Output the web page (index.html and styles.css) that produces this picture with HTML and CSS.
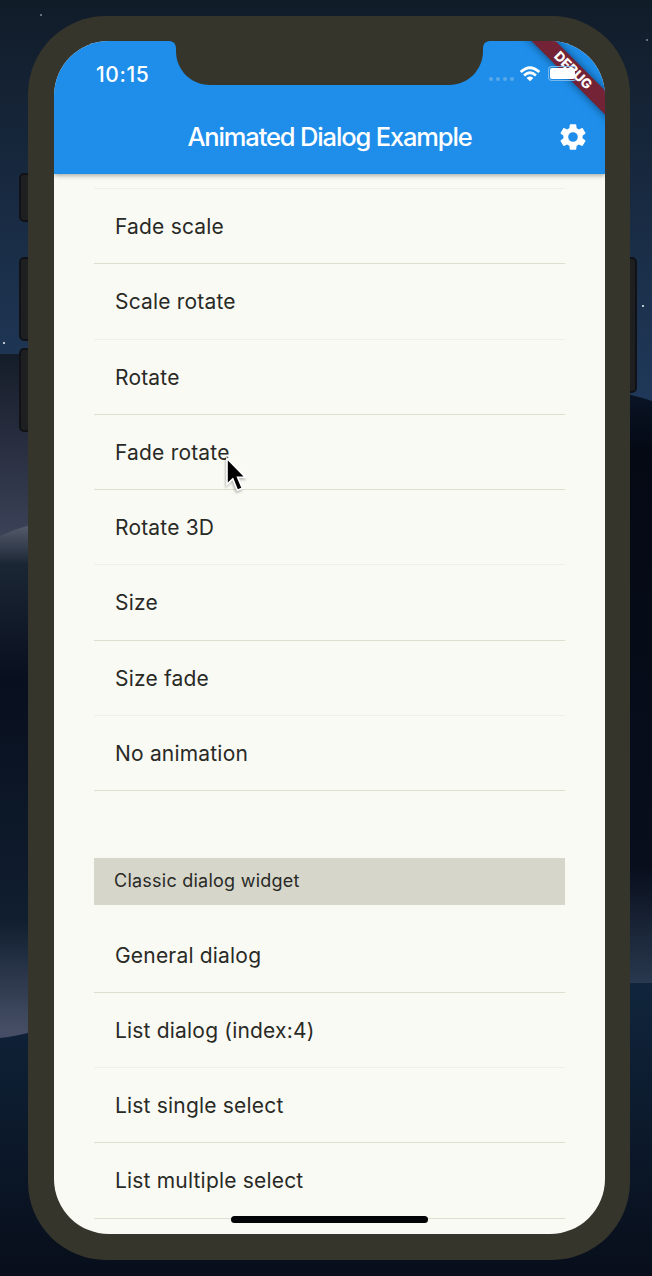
FILE: index.html
```html
<!DOCTYPE html>
<html lang="en">
<head>
<meta charset="utf-8">
<title>Animated Dialog Example</title>
<link rel="stylesheet" href="styles.css">
</head>
<body>
<div class="desktop">
  <svg class="wallpaper" viewBox="0 0 652 1276" preserveAspectRatio="none">
    <defs>
      <linearGradient id="sky" x1="0" y1="0" x2="0" y2="1"><stop offset="0" stop-color="#111c29"/><stop offset="1" stop-color="#203a5c"/></linearGradient>
      <linearGradient id="ridge" x1="0" y1="0" x2="0" y2="1"><stop offset="0" stop-color="#151c29"/><stop offset="1" stop-color="#3d4359"/></linearGradient>
      <linearGradient id="dune" x1="0" y1="0" x2="0" y2="1"><stop offset="0" stop-color="#5a6070"/><stop offset=".08" stop-color="#1b2635"/><stop offset=".3" stop-color="#080f1e"/><stop offset=".75" stop-color="#101e2f"/><stop offset=".96" stop-color="#454e65"/></linearGradient>
      <linearGradient id="low" x1="0" y1="0" x2="0" y2="1"><stop offset="0" stop-color="#10253c"/><stop offset="1" stop-color="#080e1b"/></linearGradient>
      <linearGradient id="east" x1="0" y1="0" x2="0" y2="1"><stop offset="0" stop-color="#0a1425"/><stop offset=".1" stop-color="#040914"/><stop offset=".8" stop-color="#080e1c"/><stop offset="1" stop-color="#29394f"/></linearGradient>
    </defs>
    <path fill="url(#sky)" d="M0 0h652v420H0z"/>
    <path fill="url(#ridge)" d="M0 354h40v190H0z"/>
    <path fill="url(#dune)" d="M0 536q12-6 40-14v530H0z"/>
    <path fill="url(#east)" d="M620 393q14 2 32 8v584h-32z"/>
    <path fill="url(#low)" d="M0 1038q12-1 32-6v180h590V983h30v293H0z"/>
    <g fill="#b8c6c8"><path d="M3 342h2v2H3zM642 305h2v2h-2z"/><path opacity=".5" d="M40 14h2v2h-2zM646 39h2v2h-2z"/></g>
  </svg>
  <i class="key key-mute"></i><i class="key key-up"></i><i class="key key-down"></i><i class="key key-power"></i>
  <main class="phone">
    <div class="screen">
      <header class="appbar">
        <div class="status">
          <span class="time">10:15</span>
          <div class="indicators">
            <span class="signal"><i></i><i></i><i></i><i></i></span>
            <svg class="wifi" viewBox="0 0 22 17"><g fill="none" stroke="#fff" stroke-width="2.9"><path d="M1.1 6.4Q11-2.7 20.9 6.4"/><path d="M4.7 10Q11 4.4 17.3 10"/></g><path fill="#fff" d="M7.4 12.7Q11 9.7 14.6 12.7L11 16.2z"/></svg>
            <span class="battery"></span>
          </div>
        </div>
        <div class="toolbar">
          <h1 class="title">Animated Dialog Example</h1>
          <svg class="gear" viewBox="0 0 24 24"><path fill="#fff" d="M19.14 12.94c.04-.3.06-.61.06-.94 0-.32-.02-.64-.07-.94l2.03-1.58c.18-.14.23-.41.12-.61l-1.92-3.32c-.12-.22-.37-.29-.59-.22l-2.39.96c-.5-.38-1.03-.7-1.62-.94l-.36-2.54c-.04-.24-.24-.41-.48-.41h-3.84c-.24 0-.43.17-.47.41l-.36 2.54c-.59.24-1.13.57-1.62.94l-2.39-.96c-.22-.08-.47 0-.59.22L2.74 8.87c-.12.21-.08.47.12.61l2.03 1.58c-.05.3-.09.63-.09.94s.02.64.07.94l-2.03 1.58c-.18.14-.23.41-.12.61l1.92 3.32c.12.22.37.29.59.22l2.39-.96c.5.38 1.03.7 1.62.94l.36 2.54c.05.24.24.41.48.41h3.84c.24 0 .44-.17.47-.41l.36-2.54c.59-.24 1.13-.56 1.62-.94l2.39.96c.22.08.47 0 .59-.22l1.92-3.32c.12-.22.07-.47-.12-.61zM12 15.6A3.6 3.6 0 1 1 12 8.4a3.6 3.6 0 0 1 0 7.2z"/></svg>
        </div>
      </header>
      <div class="list">
        <div class="row">Fade scale</div>
        <div class="row faint">Scale rotate</div>
        <div class="row">Rotate</div>
        <div class="row">Fade rotate</div>
        <div class="row faint">Rotate 3D</div>
        <div class="row">Size</div>
        <div class="row faint">Size fade</div>
        <div class="row">No animation</div>
        <div class="section">Classic dialog widget</div>
        <div class="row">General dialog</div>
        <div class="row faint">List dialog (index:4)</div>
        <div class="row">List single select</div>
        <div class="row">List multiple select</div>
      </div>
      <div class="debug">DEBUG</div>
      <div class="home"></div>
    </div>
    <svg class="notch" viewBox="0 0 323 46"><path d="M0 0h323v1c-5 0-8 2-8 8v2c0 19-15 34-34 34H42C23 45 8 30 8 11V9C8 3 5 1 0 1z"/></svg>
  </main>
  <svg class="cursor" viewBox="0 0 24 38"><path fill="#000" stroke="#fff" stroke-width="1.6" d="M2 1.5v25.8l5.8-5.5 4.6 11.4 4.9-2-4.7-11h7.7z"/></svg>
</div>
</body>
</html>
```
FILE: styles.css
```css
* { box-sizing: border-box; }
body { margin: 0; font-family: Inter, "Liberation Sans", sans-serif; }
.desktop { position: relative; width: 652px; height: 1276px; overflow: hidden; padding: 16px 0 0 28px; background: #0b1422; }
.wallpaper { position: absolute; inset: 0; width: 652px; height: 1276px; }
.phone { position: relative; width: 602px; height: 1244px; padding: 25px 25px 26px 26px; border-radius: 78px; background: #36352b; }
.screen { position: relative; height: 1193px; border-radius: 55px; overflow: hidden; background: #fafaf4; }
.key { position: absolute; background: #1e1f20; border: 2px solid #101218; border-radius: 5px; }
.key-mute { left: 19px; top: 173px; width: 14px; height: 49px; }
.key-up { left: 19px; top: 257px; width: 14px; height: 84px; }
.key-down { left: 19px; top: 348px; width: 14px; height: 84px; }
.key-power { left: 624px; top: 257px; width: 13px; height: 136px; }
.appbar { position: relative; height: 133px; background: #1e8eea; color: #fff; box-shadow: 0 1px 5px rgba(0, 0, 0, .4); }
.status { position: relative; z-index: 2; display: flex; justify-content: space-between; height: 59px; padding: 0 28px 0 42px; }
.time { padding-top: 21px; font-size: 21px; line-height: 26px; font-weight: 500; letter-spacing: .6px; }
.indicators { display: flex; align-items: flex-start; padding-top: 25px; }
.signal { display: flex; gap: 3px; margin: 11px 5px 0 0; }
.signal i { width: 4px; height: 4px; border-radius: 2px; background: #59a9e8; }
.wifi { width: 22px; height: 16px; margin-right: 7px; }
.battery { width: 29px; height: 15px; border: 1px solid #78b9ec; border-right-color: transparent; border-radius: 4px; background: #fff content-box; padding: 1px; }
.toolbar { display: flex; align-items: center; justify-content: center; position: relative; height: 74px; }
.title { margin: 0; font-size: 25.5px; font-weight: 500; line-height: 32px; letter-spacing: -1.15px; white-space: nowrap; }
.gear { position: absolute; right: 16px; top: 21px; width: 32px; height: 32px; }
.list { margin: 14px 40px 0; border-top: 1px solid #f0f0ea; color: #292a26; }
.row { height: 75.25px; padding-left: 21px; border-bottom: 1.5px solid #dedfcf; font-size: 21px; line-height: 76px; letter-spacing: .19px; white-space: nowrap; }
.row.faint { border-color: #f0f0ea; }
.section { height: 47px; margin: 67px 0 12.5px; padding-left: 20px; background: #d6d6cb; font-size: 18px; line-height: 46px; letter-spacing: .24px; }
.debug { position: absolute; right: -58px; top: 21px; width: 180px; height: 17px; transform: rotate(45deg); background: #742336; color: #fff; font-size: 13.5px; font-weight: 800; line-height: 17px; text-align: center; box-shadow: 0 0 8px rgba(0, 0, 0, .5); }
.home { position: absolute; left: 177px; bottom: 11px; width: 197px; height: 7px; border-radius: 4px; background: #020405; }
.notch { position: absolute; left: 140px; top: 24px; width: 323px; height: 46px; fill: #36352b; }
.cursor { position: absolute; left: 225px; top: 457px; width: 24px; height: 38px; filter: drop-shadow(-1px 2px 1px rgba(0, 0, 0, .25)); }
```
